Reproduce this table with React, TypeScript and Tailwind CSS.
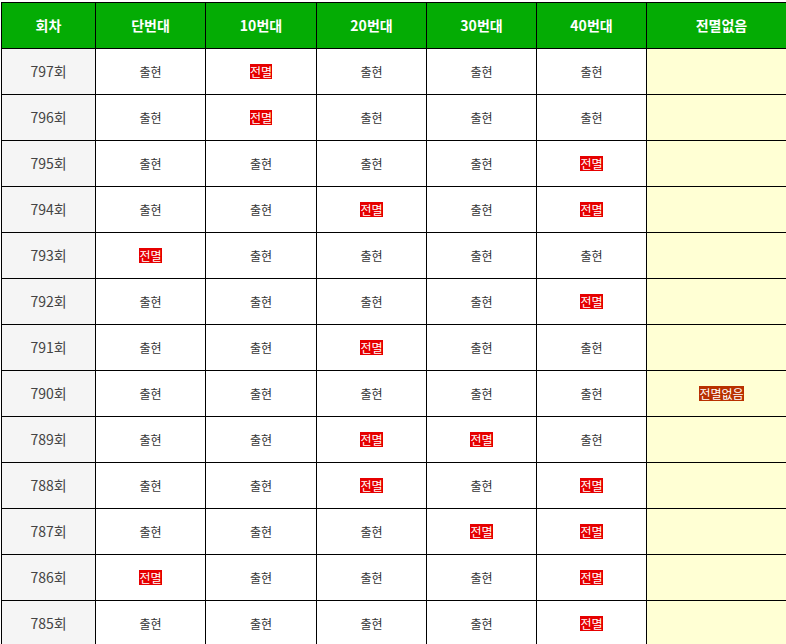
const headers = ["회차", "단번대", "10번대", "20번대", "30번대", "40번대", "전멸없음"];

// 1 = 전멸, 0 = 출현
const rows: { no: number; cells: number[] }[] = [
  { no: 797, cells: [0, 1, 0, 0, 0] },
  { no: 796, cells: [0, 1, 0, 0, 0] },
  { no: 795, cells: [0, 0, 0, 0, 1] },
  { no: 794, cells: [0, 0, 1, 0, 1] },
  { no: 793, cells: [1, 0, 0, 0, 0] },
  { no: 792, cells: [0, 0, 0, 0, 1] },
  { no: 791, cells: [0, 0, 1, 0, 0] },
  { no: 790, cells: [0, 0, 0, 0, 0] },
  { no: 789, cells: [0, 0, 1, 1, 0] },
  { no: 788, cells: [0, 0, 1, 0, 1] },
  { no: 787, cells: [0, 0, 0, 1, 1] },
  { no: 786, cells: [1, 0, 0, 0, 1] },
  { no: 785, cells: [0, 0, 0, 0, 1] },
];

const widths = ["w-[94px]", "w-[110px]", "w-[111px]", "w-[110px]", "w-[110px]", "w-[110px]", "w-[150px]"];

export default function App() {
  return (
    <div className="w-[786px] h-[644px] overflow-hidden bg-white pl-[1px] pt-[2px] font-['Malgun_Gothic','Noto_Sans_CJK_KR',sans-serif]">
      <table className="table-fixed border-collapse w-[796px]">
        <colgroup>
          {widths.map((w, i) => (
            <col key={i} className={w} />
          ))}
        </colgroup>
        <thead>
          <tr className="h-[46px]">
            {headers.map((h) => (
              <th
                key={h}
                className="border border-black bg-[#04ac04] text-white text-[14px] font-bold text-center p-0"
              >
                {h}
              </th>
            ))}
          </tr>
        </thead>
        <tbody>
          {rows.map((r) => {
            const none = r.cells.every((c) => c === 0);
            return (
              <tr key={r.no} className="h-[46px]">
                <td className="border border-black bg-[#f5f5f5] text-[#444] text-[14px] text-center p-0">
                  {r.no}회
                </td>
                {r.cells.map((c, i) => (
                  <td key={i} className="border border-black text-center text-[12px] text-[#333] p-0">
                    {c ? (
                      <span className="inline-block leading-[15px] bg-[#e60000] text-white">전멸</span>
                    ) : (
                      "출현"
                    )}
                  </td>
                ))}
                <td className="border border-black bg-[#ffffd4] text-center text-[12px] p-0">
                  {none && (
                    <span className="inline-block leading-[15px] bg-[#b83000] text-white">전멸없음</span>
                  )}
                </td>
              </tr>
            );
          })}
        </tbody>
      </table>
    </div>
  );
}
